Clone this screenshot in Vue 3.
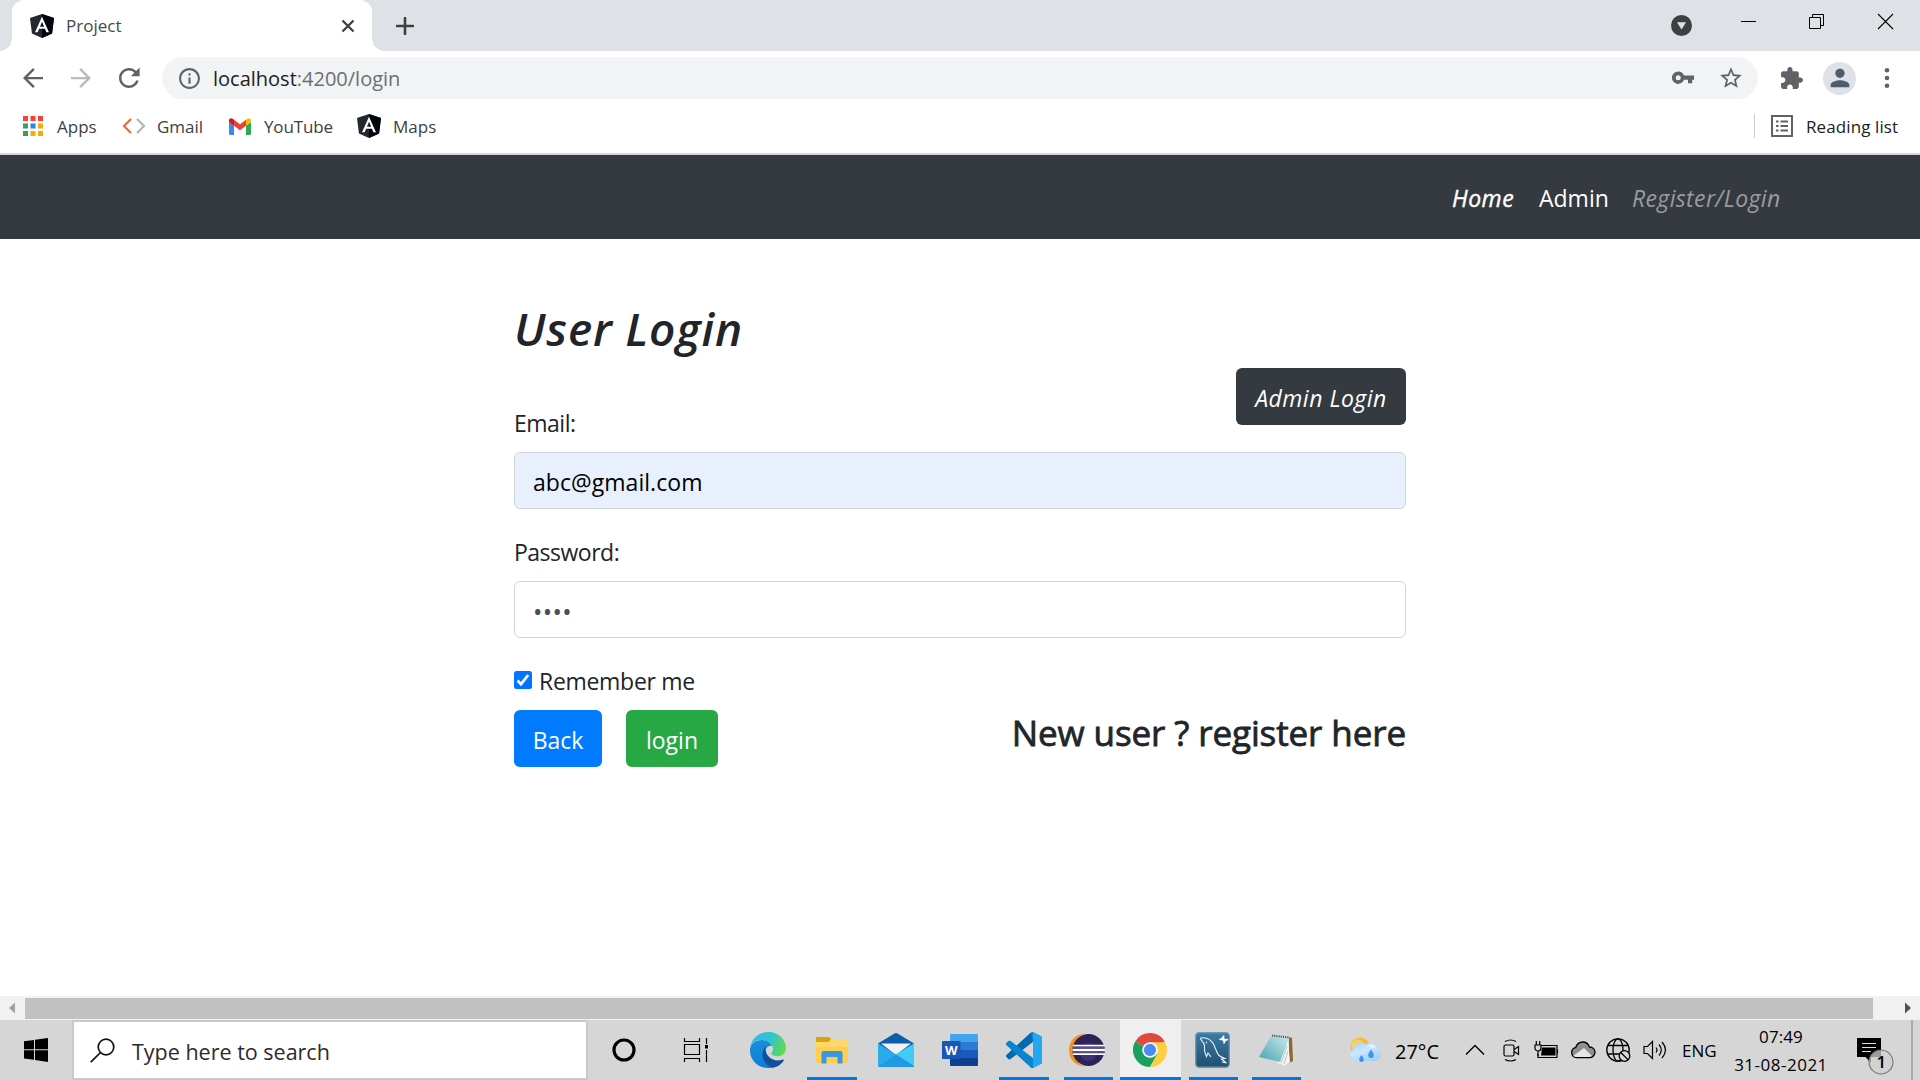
<script setup>
const bars = [
  { name: 'edge', w: 64, u: 0 },
  { name: 'explorer', w: 64, u: 50 },
  { name: 'mail', w: 64, u: 0 },
  { name: 'word', w: 64, u: 0 },
  { name: 'vscode', w: 64, u: 50 },
  { name: 'eclipse', w: 64, u: 49 },
  { name: 'chrome', w: 61, u: 61 },
  { name: 'mysql', w: 64, u: 49 },
  { name: 'notepad', w: 62, u: 49 },
]
const appTiles = ['#f44336', '#f44336', '#f44336', '#34a05a', '#1e88f5', '#f9ab00', '#34a05a', '#f9ab00', '#f9ab00']
</script>

<template>
  <div class="screen">
    <header class="tabstrip">
      <div class="tab">
        <svg class="ng" viewBox="25 30 200 200"><path fill="#23272f" d="M125 30L25 63l16 130 84 37 84-37 16-130z"/><path fill="#02050f" d="M125 30v200l84-37 16-130z"/><path fill="#fff" d="M125 52.1L66.8 182.6h21.7l11.7-29.2h49.4l11.7 29.2H183L125 52.1zm17 83.3h-34l17-40.9 17 40.9z"/></svg>
        <span class="t tab-title">Project</span>
        <svg class="tab-x" width="14" height="14" viewBox="0 0 14 14"><path d="M1.5 1.5l11 11M12.500 1.500l-11 11" stroke="#3c4043" stroke-width="2.300"/></svg>
      </div>
      <svg class="plus" width="18" height="18" viewBox="0 0 18 18"><path d="M9 1v16M1 9h16" stroke="#3c4043" stroke-width="2.600" stroke-linecap="round"/></svg>
      <div class="grow"></div>
      <svg class="winctl" width="230" height="51" viewBox="1666 0 230 51">
        <circle cx="1681.500" cy="25.500" r="10.500" fill="#3c4043"/><path d="M1677 22.300h9l-4.500 7.200z" fill="#dee1e6"/>
        <path d="M1741 21.500h15M1812.500 17.500v-3h11v11h-3M1809.500 17.500h11v11h-11z" fill="none" stroke="#000"/>
        <path d="M1878 14l15 15M1893 14l-15 15" stroke="#000" stroke-width="1.100"/>
      </svg>
    </header>

    <div class="toolbar">
      <svg class="ic back" viewBox="0 0 24 24"><path fill="#5f6368" d="M20 11.100H7.700l5.700-5.700L12 4l-8 8 8 8 1.400-1.400-5.700-5.700H20z"/></svg>
      <svg class="ic fwd" viewBox="0 0 24 24"><path fill="#b9bbbd" d="M4 11.100h12.300l-5.700-5.700L12 4l8 8-8 8-1.400-1.400 5.700-5.700H4z"/></svg>
      <svg class="ic reload" viewBox="0 0 24 24"><path fill="#5f6368" d="M17.650 6.350C16.200 4.900 14.210 4 12 4c-4.420 0-7.990 3.580-7.990 8s3.570 8 7.990 8c3.730 0 6.840-2.550 7.730-6h-2.080c-.82 2.330-3.040 4-5.650 4-3.310 0-6-2.690-6-6s2.690-6 6-6c1.660 0 3.140.69 4.220 1.780L13.500 10.500H20.500V3.500z"/></svg>
      <div class="omnibox">
        <svg width="25" height="25" viewBox="0 0 24 24"><path fill="#5f6368" d="M11 17h2v-6h-2v6zm1-15C6.480 2 2 6.480 2 12s4.480 10 10 10 10-4.480 10-10S17.520 2 12 2zm0 18c-4.410 0-8-3.590-8-8s3.590-8 8-8 8 3.590 8 8-3.590 8-8 8zM11 9h2V7h-2v2z"/></svg>
        <span class="t url"><b>localhost</b>:4200/login</span>
        <div class="grow"></div>
        <svg class="key" width="22" height="14" viewBox="0 0 22 14"><path fill="#5f6368" fill-rule="evenodd" d="M6.200.5a6.200 6.200 0 1 0 5.800 8.200h4v3.600h4.200V8.700H22V4.600H12A6.200 6.200 0 0 0 6.200.5zm0 3.700a2.500 2.500 0 1 1 0 5 2.500 2.500 0 0 1 0-5z"/></svg>
        <svg class="star" width="26" height="26" viewBox="0 0 24 24"><path fill="#5f6368" d="M22 9.240l-7.190-.62L12 2 9.190 8.630 2 9.240l5.460 4.730L5.820 21 12 17.270 18.180 21l-1.630-7.030L22 9.240zM12 15.400l-3.760 2.270 1-4.280-3.320-2.880 4.380-.38L12 6.100l1.710 4.040 4.380.38-3.320 2.880 1 4.280L12 15.400z"/></svg>
      </div>
      <svg class="ext" width="25" height="25" viewBox="0 0 24 24"><path fill="#5f6368" d="M20.500 11H19V7c0-1.100-.9-2-2-2h-4V3.500C13 2.120 11.880 1 10.500 1S8 2.120 8 3.500V5H4c-1.100 0-2 .9-2 2v3.800h1.500c1.500 0 2.700 1.200 2.700 2.700S5 16.200 3.500 16.200H2V20c0 1.100.9 2 2 2h3.800v-1.500c0-1.500 1.200-2.700 2.700-2.700s2.700 1.200 2.700 2.700V22H17c1.100 0 2-.9 2-2v-4h1.500c1.380 0 2.500-1.120 2.500-2.500S21.880 11 20.500 11z"/></svg>
      <div class="avatar"><svg width="28" height="28" viewBox="0 0 24 24"><path fill="#4f5b70" d="M12 12c2.210 0 4-1.790 4-4s-1.790-4-4-4-4 1.790-4 4 1.790 4 4 4zm0 2c-2.670 0-8 1.340-8 4v2h16v-2c0-2.660-5.330-4-8-4z"/></svg></div>
      <svg class="more" width="6" height="22" viewBox="0 0 6 22"><g fill="#5f6368"><circle cx="3" cy="3.300" r="2.300"/><circle cx="3" cy="11" r="2.300"/><circle cx="3" cy="18.700" r="2.300"/></g></svg>
    </div>

    <nav class="bookmarks">
      <svg class="b1" width="20" height="20" viewBox="0 0 20 20"><rect v-for="(c, i) in appTiles" :key="i" :x="(i % 3) * 7.500" :y="Math.floor(i / 3) * 7.500" width="5" height="5" :fill="c"/></svg>
      <span class="t bm apps">Apps</span>
      <svg class="b2" width="24" height="16" viewBox="0 0 24 16" fill="none" stroke-width="2.200"><path d="M9 1L2 8l7 7" stroke="#ec6a3c"/><path d="M15 1l7 7-7 7" stroke="#b4b4b4"/></svg>
      <span class="t bm gmail">Gmail</span>
      <svg class="b3" width="22" height="17" viewBox="0 0 22 17"><path fill="#4285f4" d="M0 4l5 3.500V17H1.500A1.500 1.500 0 0 1 0 15.500z"/><path fill="#34a853" d="M22 4l-5 3.500V17h3.500a1.500 1.500 0 0 0 1.500-1.500z"/><path fill="#ea4335" d="M5 1.800l6 4.500 6-4.500v6L11 12.300 5 7.800z"/><path fill="#c5221f" d="M0 2.500C0 .3 2.500-.3 4 1l1 .8v6L0 4z"/><path fill="#fbbc04" d="M22 2.500C22 .3 19.500-.3 18 1l-1 .8v6L22 4z"/></svg>
      <span class="t bm yt">YouTube</span>
      <svg class="ng b4" viewBox="25 30 200 200"><path fill="#23272f" d="M125 30L25 63l16 130 84 37 84-37 16-130z"/><path fill="#02050f" d="M125 30v200l84-37 16-130z"/><path fill="#fff" d="M125 52.1L66.8 182.6h21.7l11.7-29.2h49.4l11.7 29.2H183L125 52.1zm17 83.3h-34l17-40.9 17 40.9z"/></svg>
      <span class="t bm maps">Maps</span>
      <div class="grow"></div>
      <i class="sep"></i>
      <svg class="rl" width="22" height="22" viewBox="0 0 22 22"><path fill="none" stroke="#5f6368" stroke-width="2" d="M1 1h20v20H1z"/><path stroke="#5f6368" stroke-width="2.200" d="M5 6.500h2.500M9.500 6.500h7.500M5 11h2.500M9.500 11h7.500M5 15.500h2.500M9.500 15.500h7.500"/></svg>
      <span class="t bm read">Reading list</span>
    </nav>

    <nav class="sitenav">
      <span class="t home">Home</span>
      <span class="t admin">Admin</span>
      <span class="t reg">Register/Login</span>
    </nav>

    <main>
      <form class="form" @submit.prevent>
        <h1 class="title">User Login</h1>
        <div class="toprow">
          <label class="label">Email:</label>
          <button class="btn dark">Admin Login</button>
        </div>
        <div class="input filled">abc@gmail.com</div>
        <label class="label pw">Password:</label>
        <div class="input"><span class="dots">••••</span></div>
        <label class="remember">
          <svg class="check" width="18" height="18" viewBox="0 0 18 18"><rect width="18" height="18" rx="2.500" fill="#0075ff"/><path d="M3.500 9.500l3.500 3.700L14.200 4" fill="none" stroke="#fff" stroke-width="2.700"/></svg>
          <span>Remember me</span>
        </label>
        <div class="actions">
          <button class="btn blue">Back</button>
          <button class="btn green">login</button>
          <div class="grow"></div>
          <h3 class="new">New user ? register here</h3>
        </div>
      </form>
    </main>

    <div class="scroll">
      <svg width="25" height="24" viewBox="0 0 25 24"><path d="M15 6.500v11L9 12z" fill="#a3a3a3"/></svg>
      <div class="thumb"></div>
      <svg width="47" height="24" viewBox="0 0 47 24"><path d="M32 6.500v11l6-5.500z" fill="#505050"/></svg>
    </div>

    <footer class="taskbar">
      <div class="start"><svg width="24" height="24" viewBox="0 0 24 24"><path d="M0 3.300l10-1.400v9.400H0zM11 1.700L24 0v11.300H11zM0 12.300h10v9.500L0 20.400zM11 12.300h13V24l-13-1.900z"/></svg></div>
      <div class="search">
        <svg width="25" height="25" viewBox="0 0 25 25" fill="none" stroke="#111" stroke-width="1.700"><circle cx="16" cy="9" r="7.800"/><path d="M10.500 14.500L.8 24.200"/></svg>
        <span class="t">Type here to search</span>
      </div>
      <div class="cell cort"><svg width="26" height="26" viewBox="0 0 26 26"><circle cx="13" cy="13" r="10" fill="none" stroke="#000" stroke-width="3.200"/></svg></div>
      <div class="cell view"><svg width="26" height="24" viewBox="0 0 26 24" fill="none" stroke="#000" stroke-width="1.200"><path d="M1.500 0v3.500h15V0M1.500 6.500h15v10h-15zM1.500 24v-3.500h15V24M23.500 0v6M23.500 12v12"/><path d="M22 7h3v3.500h-3z" fill="#000" stroke="none"/></svg></div>

      <div v-for="b in bars" :key="b.name" class="cell app" :class="b.name" :style="{ width: b.w + 'px' }">
        <svg v-if="b.name === 'edge'" width="36" height="36" viewBox="0 0 108 108">
          <defs>
            <linearGradient id="e1" x1="0" y1=".3" x2="1" y2=".6"><stop offset="0" stop-color="#35b8ee"/><stop offset=".5" stop-color="#2fc3cf"/><stop offset="1" stop-color="#62dc4e"/></linearGradient>
            <linearGradient id="e2" x1=".3" y1="0" x2=".5" y2="1"><stop offset="0" stop-color="#1a8fd6"/><stop offset="1" stop-color="#0b7ddb"/></linearGradient>
          </defs>
          <path fill="url(#e2)" d="M0 50C6 24 40 16 62 34l6 8c-20-4-32 20-10 38 14 10 30 12 42 4C90 100 74 108 56 108 22 108-2 82 0 50z"/>
          <path fill="#11509c" d="M46 44c-14 16-12 50 20 63 16-2 28-10 35-21 2-3-1-4-4-3-24 8-52-6-51-39z"/>
          <path fill="url(#e1)" d="M0 50C4 18 28 0 55 0c32 0 53 24 53 48 0 16-12 25-24 25-14 0-21-5-20-9 1-3 5-5 5-14C69 34 50 24 34 24 16 24 4 34 0 50z"/>
        </svg>
        <svg v-else-if="b.name === 'explorer'" width="32" height="27" viewBox="0 0 32 27">
          <path fill="#ffcf52" d="M0 3h14.500l2-1H31a1 1 0 0 1 1 1v21.500a1.500 1.500 0 0 1-1.500 1.500h-29A1.500 1.500 0 0 1 0 24.500z"/><path fill="#e0a008" d="M0 1.200A1.200 1.200 0 0 1 1.200 0H13l2 2-2 3H0z"/><path fill="#ffdf80" d="M0 5h13l3-3h16v8H0z" opacity=".55"/>
          <path fill="#3a98e0" d="M7.500 14h17a2 2 0 0 1 2 2v10.500h-5V20h-11v6.500h-5V16a2 2 0 0 1 2-2z"/>
        </svg>
        <svg v-else-if="b.name === 'mail'" width="36" height="34" viewBox="0 0 36 34">
          <path fill="#0a5ea9" d="M0 10.500L16.500.5q1.500-1 3 0L36 10.500 18 24z"/><path fill="#f2f2f2" d="M3 10.500h30L18 22z"/><path fill="#29abec" d="M0 10.500L18 21.500l18-11V33a1 1 0 0 1-1 1H1a1 1 0 0 1-1-1z"/><path fill="#40ccf6" d="M36 10.500L18 21.500 36 33z"/><path fill="#1a8ddb" d="M18 21.500L36 33v1H18L0 34z" opacity=".55"/>
        </svg>
        <svg v-else-if="b.name === 'word'" width="36" height="32" viewBox="0 0 36 32">
          <path fill="#41a5ee" d="M8 1a1 1 0 0 1 1-1h26a1 1 0 0 1 1 1v7H8z"/><path fill="#2b7cd3" d="M8 8h28v8H8z"/><path fill="#185abd" d="M8 16h28v8H8z"/><path fill="#103f91" d="M8 24h28v7a1 1 0 0 1-1 1H9a1 1 0 0 1-1-1z"/><rect y="7" width="18.500" height="18" rx="1" fill="#1a56b8"/><text x="9.250" y="21" text-anchor="middle" font-size="13" font-weight="700" fill="#fff">W</text>
        </svg>
        <svg v-else-if="b.name === 'vscode'" width="36" height="36" viewBox="0 0 24 24">
          <path fill="#0a84d0" d="M23.150 2.587L18.210.21a1.494 1.494 0 0 0-1.705.29l-9.460 8.630-4.120-3.128a.999.999 0 0 0-1.276.057L.327 7.261A1 1 0 0 0 .326 8.740L3.899 12 .326 15.260a1 1 0 0 0 .001 1.479L1.650 17.940a.999.999 0 0 0 1.276.057l4.120-3.128 9.460 8.630a1.492 1.492 0 0 0 1.704.29l4.942-2.377A1.500 1.500 0 0 0 24 20.060V3.939a1.500 1.500 0 0 0-.85-1.352zm-5.146 14.861L10.826 12l7.178-5.448v10.896z"/>
          <path fill="#0669ae" d="M7.050 9.130L16.500.5l1.500 6.050-14.100 10.700-1 .75a1 1 0 0 1-1.260-.06L.33 16.740a1 1 0 0 1 0-1.480z"/><path fill="#24a7f2" d="M18 .15l5.150 2.437A1.500 1.500 0 0 1 24 3.939V20.060a1.500 1.500 0 0 1-.85 1.350L18 23.850z"/>
          <path fill="#0a84d0" d="M2.920 6L18 17.450V23.800a1.500 1.500 0 0 1-1.500-.3L.33 8.740a1 1 0 0 1 0-1.480L1.650 6.060A1 1 0 0 1 2.920 6z"/>
        </svg>
        <svg v-else-if="b.name === 'eclipse'" width="36" height="34" viewBox="0 0 36 34">
          <path fill="#f7941e" d="M15 .5C6 1.500 0 8 0 17s6 15.500 15 16.500C8 30 5 24 5 17S8 4 15 .5z"/><circle cx="19.500" cy="17" r="16" fill="#2c2255"/><circle cx="19.500" cy="19" r="9" fill="#3d3173"/><path fill="#fff" d="M4.200 11.700h31.300v1.800H3.800zM3.600 15.700h32.200v2.600H3.600zM3.800 20.200h31.700v1.900H4.200z"/><path fill="#57508f" d="M3.600 13.700h32.200v1.800H3.600zM3.600 18.500h32.200V20H3.600z"/>
        </svg>
        <svg v-else-if="b.name === 'chrome'" width="34" height="34" viewBox="0 0 48 48">
          <path fill="#dd4b3e" d="M24 24L3.200 12A24 24 0 0 1 44.800 12z"/><path fill="#18a15f" d="M24 24L3.200 12A24 24 0 0 0 24 48l10.400-18z"/><path fill="#ffcd41" d="M24 13h21.300A24 24 0 0 1 24 48l10-18z"/><circle cx="24" cy="24" r="11" fill="#fff"/><circle cx="24" cy="24" r="8.700" fill="#4c8bf5"/>
        </svg>
        <svg v-else-if="b.name === 'mysql'" width="35" height="36" viewBox="0 0 35 36">
          <defs><linearGradient id="m" x2="0" y2="1"><stop offset="0" stop-color="#3a7ba8"/><stop offset="1" stop-color="#1f5070"/></linearGradient></defs>
          <rect x=".7" y=".7" width="33.600" height="34.600" rx="3.500" fill="url(#m)" stroke="#6d96b0" stroke-width="1.400"/>
          <path fill="none" stroke="#e8f2f8" stroke-width="1.100" d="M5.500 6c5-1 10 1 13 6 2 4 3 8 5 11 1.500 1.500 4 2.500 6.500 3.500l-3.500.5 5 4-4.500-1M5.500 6c0 3 4 4 4 8 0 3-.5 5 1 8l1 2.500 1.500-3.500 3 4"/><circle cx="11.500" cy="10.500" r=".7" fill="#fff"/><path fill="none" stroke="#fff" stroke-width="3" d="M26.500 6l4 3"/><path fill="none" stroke="#fff" stroke-width="1.800" d="M28.500 3.500c.5 3-2 4.500-4 3.500M29 11.500c0-3 2-4.500 3.800-3.500"/>
        </svg>
        <svg v-else width="34" height="32" viewBox="0 0 34 32">
          <defs><linearGradient id="n" x1="1" x2="0" y2="1"><stop offset="0" stop-color="#cbe9ec"/><stop offset="1" stop-color="#46a3b0"/></linearGradient></defs>
          <path fill="#8a6a2c" d="M30 3l3 1 1 23-4 2z"/><path fill="#f4f6f4" d="M29 4l2 24-6 3.500-7-3z"/><path stroke="#aab6b8" stroke-width=".8" d="M28 12l-6 17M29 17l-4 13"/><path fill="url(#n)" d="M12 2l18 2-9 24L0 23z"/><path stroke="#555" stroke-width="2" stroke-dasharray="1.200 1" d="M13 1.500l17 2"/>
        </svg>
        <i v-if="b.u" class="under" :style="{ width: b.u + 'px' }"></i>
      </div>

      <svg class="weather" width="31" height="26" viewBox="0 0 31 26">
        <defs><linearGradient id="w" x2=".6" y2="1"><stop offset="0" stop-color="#9fd0f6"/><stop offset=".5" stop-color="#c9e8fc"/><stop offset="1" stop-color="#a3d3f7"/></linearGradient></defs>
        <circle cx="10" cy="10" r="9.500" fill="#fbb62f"/><circle cx="7.500" cy="8.500" r="6" fill="#fdd062"/>
        <path fill="url(#w)" d="M6 24a6.300 6.300 0 0 1-2-12A7 7 0 0 1 16 7.500a6.500 6.500 0 0 1 11 4.500 6.300 6.300 0 0 1-1.500 12z"/>
        <path fill="#e3f4fe" d="M18 8a6 6 0 0 1 8 2.500q-3-.5-5 1z"/>
        <path fill="#3f93ee" d="M11.500 18c1.300 2 2.300 3.200 2.300 4.700a2.300 2.300 0 0 1-4.600 0c0-1.500 1-2.700 2.300-4.700zM21 12.500c1.700 2.500 2.800 4 2.800 5.700a2.800 2.800 0 0 1-5.600 0c0-1.700 1.100-3.200 2.800-5.700z"/>
      </svg>
      <span class="t temp">27°C</span>
      <svg class="chev" width="20" height="12" viewBox="0 0 20 12"><path d="M1 10.500l9-9 9 9" fill="none" stroke="#000" stroke-width="1.400"/></svg>
      <svg class="cam" width="17" height="23" viewBox="0 0 17 23" fill="none" stroke="#000" stroke-width="1.200"><rect x="1" y="6" width="10" height="11" rx="1.500"/><path d="M11 10.500l4.500-3v8l-4.500-3M2 2.500Q7.500-.5 13 2.500M2 20.500q5.500 3 11 0"/></svg>
      <svg class="batt" width="25" height="18" viewBox="0 0 25 18"><path d="M7 4.500h16v12H4V13M23.500 8.500v4" fill="none" stroke="#000" stroke-width="1.200"/><path d="M8 6.500h13.500v8H7z"/><path d="M1 4h6v3a3 3 0 0 1-6 0zM2.300 0v4M5.700 0v4M4 10v5" fill="#d6d6d6" stroke="#000" stroke-width="1.200"/></svg>
      <svg class="cloud" width="26" height="18" viewBox="0 0 26 18"><path fill="#8f8f8f" stroke="#000" stroke-width="1.300" d="M6 16.500A5 5 0 0 1 5.500 6.700C7 2.500 10 1 13 1s5 1.500 6.500 5A5.200 5.200 0 0 1 20 16.500z"/><path fill="#e6e6e6" d="M3 15l11-8 8 8-2 1H6z"/></svg>
      <svg class="globe" width="25" height="25" viewBox="0 0 25 25" fill="none" stroke="#000" stroke-width="1.300"><circle cx="12" cy="12" r="11.200"/><ellipse cx="12" cy="12" rx="5" ry="11.200"/><path d="M2 7.500h20M1 16h14"/><circle cx="18.500" cy="18" r="5.300" fill="#d6d6d6"/><path d="M14.800 14.500l7.400 7.400"/></svg>
      <svg class="vol" width="24" height="20" viewBox="0 0 24 20" fill="none" stroke="#000" stroke-width="1.200"><path d="M1 6.500h3.500L9.500 1.500v17l-5-5H1zM13 7.500q2 2.500 0 5M16 4.500q4.500 5.500 0 11M19 2q7 8 0 16"/></svg>
      <span class="t eng">ENG</span>
      <div class="clock"><span>07:49</span><span class="date">31-08-2021</span></div>
      <svg class="note" width="38" height="38" viewBox="0 0 38 38"><path d="M0 0h24v19H14v6l-5.500-6H0z"/><path d="M5 5.500h14M5 9.500h14M5 13.500h9" stroke="#ddd" stroke-width="1.200"/><circle cx="24" cy="24" r="12" fill="#cfcfcf" fill-opacity=".75" stroke="#777" stroke-width="1.100"/><text x="19.500" y="30" font-size="17" font-weight="600">1</text></svg>
      <i class="edge-line"></i>
    </footer>
  </div>
</template>

<style>
body { margin: 0; overflow: hidden; background: #fff; }
</style>
<style scoped>
.screen { width: 1920px; height: 1080px; display: flex; flex-direction: column; font-family: "Open Sans", "Noto Sans", sans-serif; color: #212529; white-space: nowrap; overflow: hidden; }
.screen svg { flex: none; display: block; }
.grow { flex: 1; }
.tabstrip { height: 51px; background: #dee1e6; display: flex; align-items: center; flex: none; }
.tab { position: relative; width: 360px; height: 51px; margin-left: 12px; background: #fff; border-radius: 12px 12px 0 0; display: flex; align-items: center; box-sizing: border-box; padding: 0 17px 0 18px; }
.tab::before, .tab::after { content: ""; position: absolute; bottom: 0; width: 12px; height: 12px; }
.tab::before { left: -12px; background: radial-gradient(circle at 0 0, #dee1e6 11.500px, #fff 12px); }
.tab::after { right: -12px; background: radial-gradient(circle at 100% 0, #dee1e6 11.500px, #fff 12px); }
.ng { width: 24px; height: 24px; }
.tab-title { margin-left: 12px; font-size: 17px; color: #45494d; flex: 1; }
.plus { margin-left: 24px; }
.winctl { margin-right: 24px; }
.toolbar { height: 54px; flex: none; display: flex; align-items: center; }
.ic { width: 30px; height: 30px; }
.back { margin-left: 18px; }
.fwd { margin-left: 18px; }
.reload { margin-left: 18px; }
.omnibox { width: 1596px; height: 42px; margin-left: 18px; border-radius: 21px; background: #f1f3f4; display: flex; align-items: center; padding: 0 14px 0 15px; box-sizing: border-box; }
.url { margin-left: 11px; font-size: 20px; color: #6b6f73; }
.url b { font-weight: 400; color: #202124; }
.star { margin-left: 24px; }
.ext { margin-left: 21px; }
.avatar { width: 33px; height: 33px; margin-left: 19px; border-radius: 50%; background: #dee1e6; display: flex; align-items: center; justify-content: center; }
.more { margin-left: 28px; }
.bookmarks { height: 42px; flex: none; border-bottom: 2px solid #d6d8db; display: flex; align-items: center; padding-bottom: 6px; }
.bm { font-size: 17px; color: #3c4043; }
.b1 { margin-left: 23px; }
.apps { margin-left: 14px; width: 65px; }
.gmail { margin-left: 11px; width: 72px; }
.yt { margin-left: 13px; width: 93px; letter-spacing: -.15px; }
.maps { margin-left: 12px; }
.sep { width: 1px; height: 24px; background: #c8cacd; margin-right: 16px; }
.read { margin-left: 13px; width: 114px; color: #202124; letter-spacing: .1px; }
.sitenav { height: 82px; padding-top: 2px; flex: none; background: #343a40; color: #fff; display: flex; align-items: center; font-size: 23px; }
.home { margin-left: 1452px; width: 87px; font-style: italic; letter-spacing: .5px; -webkit-text-stroke: .4px #fff; }
.admin { width: 93px; }
.reg { font-style: italic; color: #999c9f; letter-spacing: .37px; }
main { height: 757px; flex: none; }
.form { width: 892px; margin: 0 auto; padding-top: 60px; display: flex; flex-direction: column; font-size: 23px; }
.title { margin: 0; height: 59px; line-height: 58px; font-size: 46px; font-weight: 600; font-style: italic; letter-spacing: .8px; }
.toprow { display: flex; justify-content: space-between; align-items: flex-start; margin-top: 10px; height: 84px; }
.label { line-height: 34px; height: 34px; letter-spacing: -.5px; }
.toprow .label { margin-top: 38px; }
.pw { margin: 26px 0 12px; }
.btn { border: 0; border-radius: 6px; height: 57px; padding: 3px 0 0; font: inherit; color: #fff; text-align: center; }
.dark { width: 170px; background: #343a40; font-style: italic; letter-spacing: .5px; }
.blue { width: 88px; background: #007bff; }
.green { width: 92px; background: #28a745; margin-left: 24px; }
.input { height: 57px; box-sizing: border-box; border: 1px solid #ced4da; border-radius: 6px; padding: 3px 19px 0 18px; display: flex; align-items: center; color: #495057; }
.filled { background: #e8f0fe; color: #000; letter-spacing: .05px; }
.dots { font-size: 25px; letter-spacing: .35px; }
.remember { display: flex; align-items: center; margin: 26px 0 12px; height: 34px; line-height: 34px; gap: 7px; letter-spacing: -.3px; }
.check { margin-bottom: 2px; }
.actions { display: flex; height: 57px; }
.new { margin: 0; font-size: 35px; font-weight: 400; line-height: 46px; letter-spacing: -.1px; -webkit-text-stroke: .8px #212529; }
.scroll { height: 24px; flex: none; background: #f1f1f1; display: flex; align-items: center; }
.thumb { flex: 1; height: 21px; background: #c1c1c1; }
.taskbar { height: 60px; flex: none; background: #d6d6d6; display: flex; align-items: center; color: #000; }
.start { width: 72px; display: flex; justify-content: center; }
.search { width: 516px; height: 60px; box-sizing: border-box; border: 2px solid #c9c9c9; background: #fff; display: flex; align-items: center; padding-left: 16px; font-size: 21.500px; color: #2b2b2b; }
.search .t { margin-left: 17px; padding-top: 3px; }
.cell { height: 60px; display: flex; align-items: center; justify-content: center; flex: none; position: relative; }
.cort { width: 72px; }
.view { width: 72px; padding-right: 4px; }
.under { position: absolute; bottom: 0; height: 3px; background: #0078d7; }
.eclipse svg, .chrome svg, .mysql svg { margin-right: 2px; }
.chrome { background: #efefef; }
.weather { margin-left: 43px; }
.temp { font-size: 20px; margin-left: 14px; width: 70px; padding-top: 3px; }
.cam { margin-left: 18px; }
.batt { margin-left: 14px; }
.cloud { margin-left: 11px; }
.globe { margin-left: 10px; }
.vol { margin-left: 12px; }
.eng { font-size: 17px; margin-left: 15px; width: 52px; }
.clock { width: 94px; display: flex; flex-direction: column; align-items: center; font-size: 17px; line-height: 28px; letter-spacing: .1px; padding-top: 1px; }
.date { letter-spacing: .5px; }
.note { margin-left: 29px; margin-top: 14px; }
.edge-line { width: 2px; height: 60px; background: #aaa; margin-left: 16px; }
</style>
